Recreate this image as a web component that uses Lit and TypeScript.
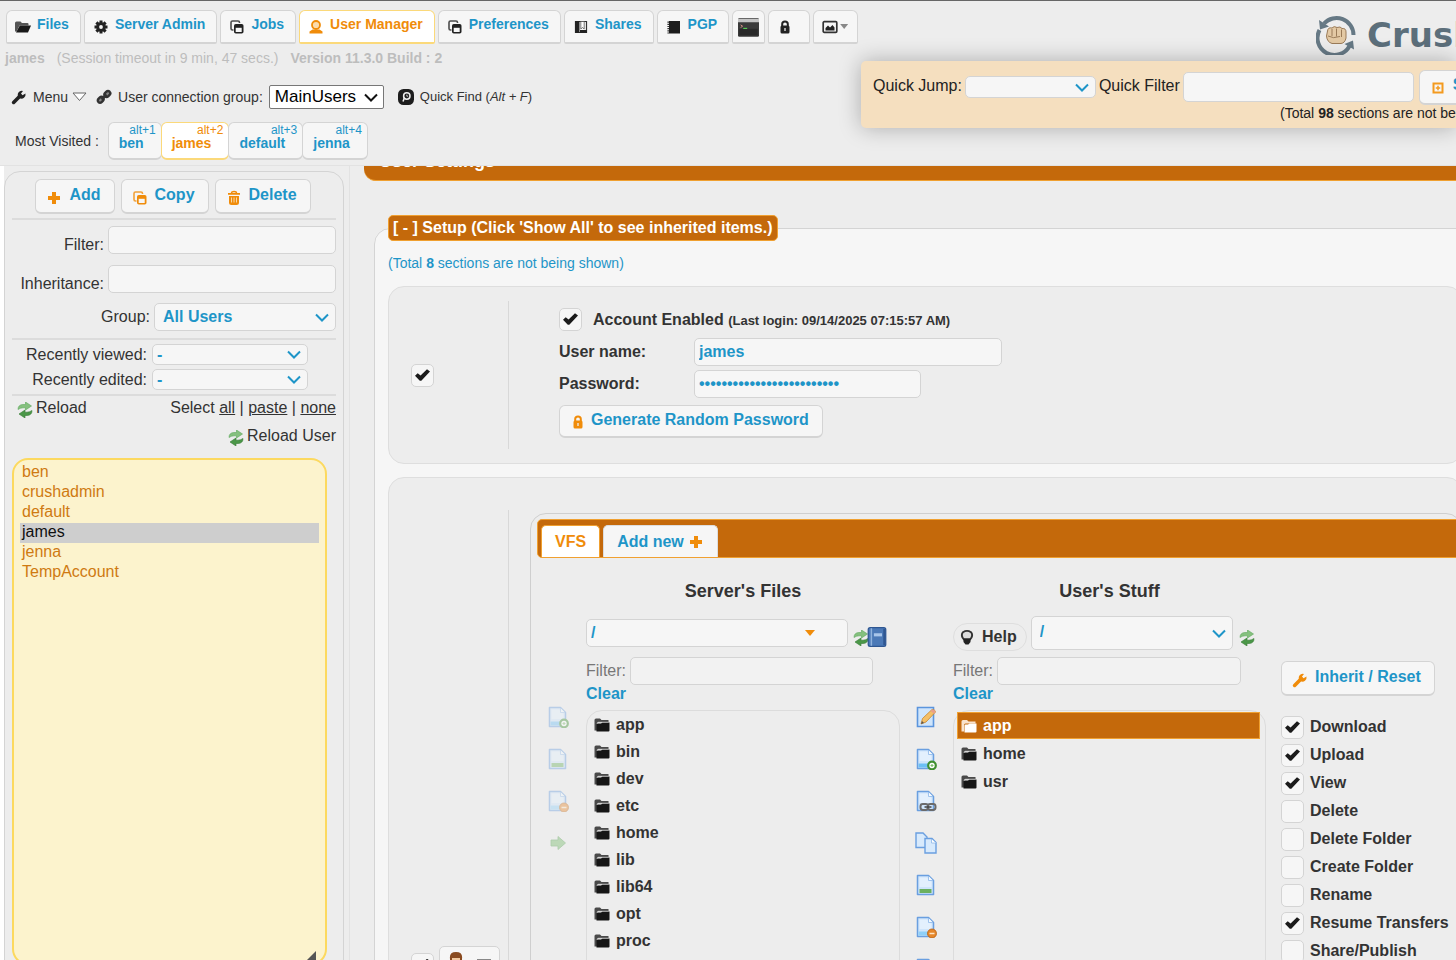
import { LitElement, html, css, svg, TemplateResult } from "lit";
import { customElement, property } from "lit/decorators.js";
import { classMap } from "lit/directives/class-map.js";

const glyphs: Record<string, TemplateResult> = {
  folderOpen: svg`<path d="M0 12.500V4Q0 2.500 1.500 2.500H5.500L7 4H12.500Q13.500 4 13.500 5V6.500H4.500L1.500 12.500Z" fill="#555"/><path d="M4.800 6.500H16L13 13.500H1Z" fill="#1a1a1a"/>`,
  folder: svg`<path d="M.5 13.500V3Q.5 1.500 2 1.500H6L7.500 3H14.500V5H4.500Q3 5 3 6.500V13.500Z" fill="#4a4a4a"/><path d="M2.500 14.500V7.500Q2.500 6.500 3.500 6.500H7L8.500 5.500H15.500V13.500Q15.500 14.500 14.500 14.500Z" fill="#161616"/><path d="M3 7Q3 5.200 4.500 5.200H14.500" fill="none" stroke="#bbb" stroke-width=".7"/>`,
  folderLight: svg`<path d="M.5 13.500V3.500Q.5 2 2 2H6L7.500 3.500H14.500V5.500H4.500Q3 5.500 3 7V13.500Z" fill="#f9e3cd"/><path d="M3.500 14.500V7.500Q3.500 6.500 4.500 6.500H7L8.500 5.500H15.500V13.500Q15.500 14.500 14.500 14.500Z" fill="#fff"/>`,
  gear: svg`<g fill="#222"><path d="M6.500 1.500h3v13h-3zM1.500 6.500h13v3h-13z"/><path d="M6.500 1.500h3v13h-3zM1.500 6.500h13v3h-13z" transform="rotate(45 8 8)"/><circle cx="8" cy="8" r="4.800"/></g><circle cx="8" cy="8" r="1.900" fill="#f6f6f6"/>`,
  copy: svg`<path d="M4.500 11H3.500Q2 11 2 9.500V3.500Q2 2 3.500 2H9Q10.500 2 10.500 3.500V4" fill="none" stroke="currentColor" stroke-width="1.600" opacity=".8"/><rect x="5" y="5" width="9.500" height="9.500" rx="1.800" fill="currentColor"/><rect x="6.700" y="8.800" width="6" height="4.200" fill="#f6f6f6"/>`,
  person: svg`<circle cx="8" cy="6" r="4" fill="#fbdcae" stroke="currentColor" stroke-width="1.800"/><path d="M4.500 10.500H11.500L14.500 12.500V14.500H1.500V12.500Z" fill="currentColor"/>`,
  bookmark: svg`<path d="M2.500 2.500H13.500V13.500H2.500Z" fill="#f6f6f6" stroke="#333" stroke-width="1.200"/><path d="M2 2h4.500v12H2z" fill="#222"/><path d="M7.800 2.500V10L9.500 8.500 11.200 10V2.500Z" fill="#fff" stroke="#555" stroke-width=".8"/><path d="M7 11h7v3H7z" fill="#222"/>`,
  book: svg`<path d="M3 2h11v12.500H3z" fill="#1d1d1d"/><path d="M2.200 2.500v12" stroke="#333" stroke-width="1.600" stroke-dasharray="1.200 1"/>`,
  lock: svg`<path d="M5.200 8V5Q5.200 2.500 8 2.500T10.800 5V8" fill="none" stroke="currentColor" stroke-width="2"/><rect x="3.500" y="6.500" width="9" height="8" rx="1.500" fill="currentColor"/><path d="M8 9v3" stroke="#eee" stroke-width="1.300"/>`,
  terminal: svg`<rect x="0" y="1" width="16" height="14" rx="1" fill="#3a3a3a"/><path d="M0 1.500H16V4H0Z" fill="#c4c4c4"/><path d="M1 9H15V14H1Z" fill="#2a2a2a"/><path d="M2 6l1.500 1L2 8" fill="none" stroke="#d98" stroke-width=".7"/><path d="M4 8.700h3" stroke="#5c5" stroke-width=".9"/>`,
  image: svg`<rect x="1.200" y="2.700" width="13.600" height="10.600" rx="1" fill="none" stroke="#333" stroke-width="1.700"/><path d="M3.500 11.500V9L6 6.500 8 8.500 10.500 6 12.500 8.500V11.500Z" fill="#222"/>`,
  wrench: svg`<path d="M2.600 13.400L9 7" stroke="currentColor" stroke-width="3.600" stroke-linecap="round"/><path d="M7 7.500Q6 4.500 8.500 2.500 10.300 1.300 12 2L10 4.500 11.500 6.200 14.500 4.500Q15 7 13 8.800 11 10.300 8.500 9.200Z" fill="currentColor"/>`,
  link: svg`<g fill="#888" stroke="#333" stroke-width="2.400"><rect x="1.500" y="8.500" width="6.500" height="4.500" rx="2.200" transform="rotate(-45 4.700 10.700)"/><rect x="8" y="2.800" width="6.500" height="4.500" rx="2.200" transform="rotate(-45 11.200 5)"/></g><path d="M5.500 10.500L10.500 5.500" stroke="#333" stroke-width="2.400"/>`,
  find: svg`<rect x="0" y="0" width="16" height="16" rx="5.500" fill="#1d1d1d"/><circle cx="8.800" cy="7" r="3.200" fill="none" stroke="#eee" stroke-width="1.500"/><path d="M6.500 8.500L5 12.500" stroke="#eee" stroke-width="1.600"/><path d="M8.800 5.600v1.600h1.300" stroke="#eee" fill="none" stroke-width=".8"/>`,
  plus: svg`<path d="M6 2h4v4h4v4h-4v4H6v-4H2V6h4z" fill="currentColor"/>`,
  trash: svg`<path d="M5.500 3Q5.500 1.500 8 1.500T10.500 3" fill="none" stroke="currentColor" stroke-width="1.400"/><path d="M2 3h12v1.800H2zM3 6h10v6.500Q13 15 10.500 15h-5Q3 15 3 12.500z" fill="currentColor"/><path d="M5.500 7.500v5M8 7.500v5M10.500 7.500v5" stroke="#fbe0b8" stroke-width=".9"/>`,
  showAll: svg`<rect x="3.500" y="3.500" width="9" height="9" fill="none" stroke="#f39a1f" stroke-width="2"/><path d="M8 5.800v4.400M5.800 8h4.400" stroke="#f39a1f" stroke-width="1.500"/>`,
  reload: svg`<path d="M1 7.500Q1 3 5.500 2.500H8.500V0L14.500 4 8.500 8V5.800H6Q3 6 1 7.500Z" fill="#85c07e" stroke="#5da85a" stroke-width=".6"/><path d="M15 8.500Q15 13 10.500 13.500H8V16L2 12 8 8V10.200H10Q13 10 15 8.500Z" fill="#4b9748" stroke="#357a34" stroke-width=".6"/>`,
  bluebook: svg`<rect x="1" y=".5" width="14" height="15" rx="1.500" fill="#4b79b7" stroke="#2f5792"/><path d="M3.500 1v14" stroke="#8fb2dd" stroke-width="1.200"/><path d="M13.800 1.500v13" stroke="#2f5792" stroke-width="1.600"/><path d="M5.500 5h6.500v2.500H5.500z" fill="#a9c6ea"/>`,
  bulb: svg`<path d="M4 3.200Q8 .6 12 3.200 14 5.500 12.500 8.500L11 10.500H5L3.500 8.500Q2 5.500 4 3.200Z" fill="#ddd" stroke="#333" stroke-width="1.900"/><path d="M4.500 9.500h7V13L9.500 15.500h-3L4.500 13Z" fill="#222"/>`,
};

const pageBase = svg`<path d="M2.500 1.500H13.500L18.500 6.500V20.500H2.500Z" fill="#cfe5fb" stroke="#6a9fe0" stroke-width="1.500" stroke-linejoin="round"/><path d="M4.500 3.500H12L16.500 8V13H4.500Z" fill="#e3f0fd"/><path d="M13.500 2V6.500H18" fill="#f4faff" stroke="#8db8ea" stroke-width=".8"/>`;
const pages: Record<string, TemplateResult> = {
  edit: svg`<path d="M2.500 1.500H18.500V20.500H2.500Z" fill="#cfe5fb" stroke="#5b95dd" stroke-width="1.600"/><path d="M6 18L7.500 12.500 17 3.500Q20 3 20.500 6L11 16Z" fill="#f4c067" stroke="#c8842a" stroke-width=".8"/><path d="M15.500 5L17 3.500Q20 3 20.500 6L19 7.800Z" fill="#e9a08a"/><path d="M6 18l1-3 2 2z" fill="#555"/>`,
  add: svg`${pageBase}<path d="M3.500 15.500H17.500V19.500H3.500Z" fill="#6cc0f5"/><circle cx="17" cy="17.500" r="3.800" fill="#fff" stroke="#3f8f2f" stroke-width="2.200"/><path d="M17 16v3M15.500 17.500h3" stroke="#7dbb6c" stroke-width="1.200"/>`,
  chain: svg`${pageBase}<g fill="none" stroke="#6a6a6a" stroke-width="2"><rect x="5.500" y="14" width="7.500" height="6" rx="2.400"/><rect x="13" y="14" width="7.500" height="6" rx="2.400"/></g><path d="M9.500 17h7" stroke="#444" stroke-width="1.500"/>`,
  two: svg`<path d="M1 1H8L12 5V15.500H1Z" fill="#d8eafc" stroke="#6a9fe0" stroke-width="1.400"/><path d="M10 6.500H17L21 10.500V21H10Z" fill="#d8eafc" stroke="#6a9fe0" stroke-width="1.400"/><path d="M16.500 7v4H21" fill="#fff" stroke="#8db8ea" stroke-width=".8"/>`,
  rename: svg`${pageBase}<path d="M4.500 15H16.500V19H4.500Z" fill="#6bb05f"/>`,
  remove: svg`${pageBase}<path d="M3.500 15.500H17.500V19.500H3.500Z" fill="#8fd0f8"/><circle cx="17" cy="17.500" r="4.500" fill="#e6872a" stroke="#b8600f" stroke-width=".8"/><path d="M14.500 17.500h5" stroke="#fde4c5" stroke-width="1.500"/>`,
  arrow: svg`<path d="M4 8H11V4.500L18.500 11 11 17.500V14H4Z" fill="#74bb69" stroke="#4f9a48" stroke-width=".8"/>`,
};

@customElement("ui-icon")
class UiIcon extends LitElement {
  @property() name = "";
  @property({ type: Number }) size = 16;
  static styles = css`
    :host { display: inline-flex; flex: none; }
    svg { display: block; }
  `;
  render() {
    const page = pages[this.name];
    return html`<svg width=${this.size} height=${this.size} viewBox=${page ? "0 0 22 22" : "0 0 16 16"} aria-hidden="true">${page ?? glyphs[this.name]}</svg>`;
  }
}

const NAV = [
  { icon: "folderOpen", label: "Files" },
  { icon: "gear", label: "Server Admin" },
  { icon: "copy", label: "Jobs" },
  { icon: "person", label: "User Manager", active: true },
  { icon: "copy", label: "Preferences" },
  { icon: "bookmark", label: "Shares" },
  { icon: "book", label: "PGP" },
];
const VISITED = ["ben", "james", "default", "jenna"];
const USERS = ["ben", "crushadmin", "default", "james", "jenna", "TempAccount"];
const SERVER_DIRS = ["app", "bin", "dev", "etc", "home", "lib", "lib64", "opt", "proc"];
const USER_DIRS = ["app", "home", "usr"];
const PERMISSIONS: [string, boolean][] = [
  ["Download", true], ["Upload", true], ["View", true], ["Delete", false], ["Delete Folder", false],
  ["Create Folder", false], ["Rename", false], ["Resume Transfers", true], ["Share/Publish", false],
];

@customElement("app-root")
class AppRoot extends LitElement {
  static styles = css`
    :host {
      display: flex; flex-direction: column; height: 100vh; overflow: hidden; position: relative;
      font-family: "Liberation Sans", Arial, sans-serif; font-size: 16px; line-height: 18px; color: #333; background: #ededed;
      --blue: #1e95c8; --orange: #f08c0a; --bar: #c4690b; --line: #d4d4d4; --field: #f6f6f6;
    }
    *, *::before { box-sizing: border-box; }
    button, input, select { font: inherit; color: inherit; margin: 0; }
    a { color: inherit; }
    .btn {
      display: inline-flex; align-items: center; gap: 7px; height: 35px; padding: 0 13px 0 10px; white-space: nowrap;
      font-weight: bold; color: var(--blue); background: var(--field); border: 1px solid var(--line); border-radius: 6px;
      border-bottom-width: 2px;
    }
    .btn span { padding-bottom: 3px; }
    .btn ui-icon { color: var(--orange); padding-top: 3px; }
    .field { height: 28px; background: var(--field); border: 1px solid var(--line); border-radius: 5px; padding: 0 4px; font-weight: bold; color: var(--blue); min-width: 0; outline: none; }
    select.field {
      appearance: none; padding-right: 26px;
      background: var(--field) url("data:image/svg+xml,%3Csvg xmlns='http://www.w3.org/2000/svg' width='14' height='9'%3E%3Cpath d='M1 1.500L7 7.500L13 1.500' fill='none' stroke='%231e95c8' stroke-width='2'/%3E%3C/svg%3E") no-repeat right 6px center;
    }

    header { flex: none; display: flex; justify-content: space-between; border-top: 1px solid #666; border-bottom: 1px solid #e2e2e2; padding: 9px 0 5px; }
    .left { flex: none; }
    nav { display: flex; gap: 3px; padding-left: 6px; }
    .nav { display: flex; align-items: center; gap: 6px; height: 34px; padding: 0 11px 0 8px; font-size: 14px; font-weight: bold; color: var(--blue); background: var(--field); border: 1px solid var(--line); border-bottom-width: 2px; border-radius: 6px 6px 2px 2px; white-space: nowrap; }
    .nav span { padding-bottom: 5px; }
    .nav ui-icon { color: #222; padding-top: 1px; }
    .nav.active { background: #fff; color: var(--orange); border-color: #fbd97a; }
    .nav.active ui-icon { color: var(--orange); }
    .nav.glyph { padding: 0 5px; }
    .nav.pad { padding: 0 16px 0 8px; }
    .nav.menu { gap: 2px; padding: 0 9px 0 8px; }
    .drop { width: 8px; height: 5px; background: #888; clip-path: polygon(0 0, 100% 0, 50% 100%); }
    .status { display: flex; gap: 12px; margin-top: 6px; padding-left: 5px; font-size: 14px; line-height: 16px; color: #bdbdbd; }
    .tools { display: flex; align-items: center; margin-top: 19px; padding-left: 11px; height: 24px; font-size: 14px; }
    .menubtn { display: flex; align-items: center; gap: 6px; padding: 0; border: 0; background: none; }
    .menubtn ui-icon { color: #222; }
    .tri { display: block; margin-left: -2px; }
    .tools label { display: flex; align-items: center; gap: 6px; margin-left: 9px; }
    .group { font-size: 17px; color: #000; border: 1px solid #777; border-radius: 2px; height: 24px; width: 115px; padding: 0 0 0 5px; appearance: none;
      background: #fff url("data:image/svg+xml,%3Csvg xmlns='http://www.w3.org/2000/svg' width='14' height='9'%3E%3Cpath d='M1 1.500L7 7.500L13 1.500' fill='none' stroke='%23111' stroke-width='2'/%3E%3C/svg%3E") no-repeat right 5px center; }
    .quickfind { display: flex; align-items: center; gap: 6px; margin-left: 14px; font-size: 13px; }
    .visited { display: flex; align-items: center; margin-top: 13px; padding-left: 15px; font-size: 14px; }
    .tabs { display: flex; margin-left: 9px; }
    .tab { display: flex; flex-direction: column; height: 38px; margin-right: -1px; padding: 1px 17px 0 10px; background: var(--field); border: 1px solid var(--line); border-bottom-width: 2px; border-radius: 6px; color: var(--blue); font-weight: bold; text-align: left; line-height: 14px; }
    .tab small { font-size: 12px; line-height: 12px; font-weight: normal; align-self: flex-end; margin-right: -12px; }
    .tab.active { background: #fff; color: var(--orange); border-color: #fbd97a; }
    .brand { display: flex; gap: 10px; width: 140px; overflow: hidden; height: 50px; align-items: center; }
    .brand svg { flex: none; }
    .brand span { font-family: "DejaVu Sans", sans-serif; font-weight: bold; font-size: 34px; line-height: 40px; color: #5c6f7b; }

    .quick { position: absolute; z-index: 2; top: 61px; left: 861px; right: 0; padding: 8px 0 7px 12px; background: #f5dfbf; border-radius: 5px 0 0 5px; box-shadow: 0 0 22px rgba(0,0,0,.28); color: #222; clip-path: inset(-40px 0 -40px -40px); }
    .quickrow { display: flex; align-items: center; gap: 3px; height: 36px; white-space: nowrap; overflow: hidden; }
    .quickrow label { padding-bottom: 3px; }
    .quickrow .jump { width: 131px; height: 22px; flex: none; }
    .quickrow .qf { width: 231px; height: 30px; flex: none; }
    .quickrow .btn { flex: none; margin-left: 2px; }
    .total { padding-left: 407px; font-size: 14px; line-height: 16px; white-space: nowrap; overflow: hidden; }

    .body { flex: 1; display: flex; min-height: 0; }
    aside { flex: none; width: 350px; padding: 5px 5px 0 0; border-left: 4px solid #fff; border-right: 1px solid #e2e2e2; overflow: hidden; }
    .panel { border: 1px solid var(--line); border-radius: 16px; padding: 7px 7px 60px; }
    .row { display: flex; justify-content: flex-end; gap: 4px; align-items: center; }
    .acts { justify-content: center; gap: 6px; padding-right: 2px; }
    .row.in { align-items: flex-end; margin-top: 11px; }
    .row.first { margin-top: 6px; }
    .row.mid { align-items: center; margin-top: 10px; }
    .row .f { width: 228px; }
    .row .g { width: 182px; padding-left: 8px; }
    .rec { margin-top: 4px; padding-right: 28px; gap: 5px; }
    .rec .field { width: 156px; height: 21px; line-height: 16px; }
    hr { border: 0; border-top: 2px solid #dcdcdc; margin: 4px 0 0; }
    .group-end { margin-top: 7px; }
    .links { display: flex; justify-content: space-between; margin-top: 3px; padding-left: 5px; }
    .link { display: flex; gap: 3px; padding: 0; border: 0; background: none; line-height: 18px; }
    .link ui-icon { padding-top: 3px; }
    .links.end { justify-content: flex-end; margin-top: 9px; }
    .listwrap { position: relative; margin-top: 12px; width: 315px; }
    .users { display: block; width: 100%; height: 507px; padding: 3px 6px; background: #fcf3cd; border: 2px solid #fcd95f; border-radius: 16px; color: #cf7a12; overflow: hidden; outline: none; }
    .users option { padding: 0 2px; min-height: 20px; height: 20px; line-height: 20px; }
    .grip { position: absolute; right: 11px; bottom: 4px; width: 10px; height: 10px; background: #555; clip-path: polygon(100% 0, 100% 100%, 0 100%); }

    main { flex: 1; min-width: 0; padding: 0 0 0 14px; overflow: hidden; }
    .title { margin: -18px 0 0; height: 33px; padding: 2px 15px 0; background: var(--bar); border-bottom: 1px solid #f0a030; border-radius: 12px 0 0 12px; font-size: 18px; line-height: 22px; font-weight: bold; color: #fff; }
    fieldset { margin: 34px -20px 0 10px; padding: 12px 12px 0 13px; border: 1px solid var(--line); border-radius: 16px; background: #f6f6f6; min-width: 0; }
    legend { padding: 0 4px; line-height: 24px; background: var(--bar); color: #fff; font-weight: bold; border: 1px solid #f0a030; border-radius: 5px; white-space: nowrap; }
    .note { margin: 0; font-size: 14px; line-height: 20px; color: var(--blue); }
    .card { display: grid; grid-template-columns: 120px 1fr; margin-top: 13px; padding: 14px 0; border: 1px solid #dedede; border-radius: 16px; background: #ededed; }
    .card.two { padding-top: 32px; }
    .pick { display: flex; align-items: center; padding-left: 22px; gap: 5px; border-right: 1px solid #d8d8d8; }
    .two .pick { align-items: flex-start; padding-top: 436px; }
    .two .pick input { margin-top: 7px; }
    .avatar { width: 61px; height: 35px; display: flex; gap: 12px; align-items: flex-start; padding: 5px 7px; background: var(--field); border: 1px solid var(--line); border-radius: 5px; }
    .avatar i { width: 14px; height: 2px; background: #888; margin-top: 7px; }
    input[type="checkbox"] { appearance: none; flex: none; width: 23px; height: 23px; margin: 0; border: 1px solid var(--line); border-radius: 5px; background: var(--field); display: grid; place-items: center; }
    input[type="checkbox"]:checked::before { content: ""; width: 15px; height: 12px; background: #1b1b1b; clip-path: polygon(0 56%, 18% 36%, 37% 55%, 80% 2%, 100% 20%, 42% 98%, 32% 98%); }
    .account { padding: 6px 0 11px 50px; font-weight: bold; display: flex; flex-direction: column; gap: 4px; align-items: flex-start; }
    .enabled { display: flex; align-items: center; gap: 11px; height: 24px; margin-bottom: 3px; }
    .enabled label { padding-top: 3px; }
    .enabled small { font-size: 13px; }
    .pair { display: grid; grid-template-columns: 135px auto; height: 28px; }
    .pair label { padding-top: 5px; }
    .pair .name { width: 308px; }
    .pair .pass { width: 227px; }
    .account .btn { height: 33px; margin-top: 3px; gap: 5px; }
    .account .btn ui-icon { padding-top: 1px; }

    .vfs { margin: 3px 0 0 21px; padding: 5px 0 0 6px; border: 1px solid #cfcfcf; border-radius: 16px; }
    .vtabs { display: flex; gap: 3px; height: 39px; padding: 5px 3px 0; background: var(--bar); border: 1px solid #f0a030; border-radius: 5px; }
    .vtab { display: flex; align-items: center; gap: 4px; height: 32px; padding: 0 13px; border: 1px solid #f0a030; border-bottom: 0; border-radius: 5px 5px 0 0; background: #fff; color: var(--orange); font-weight: bold; }
    .vtab.new { background: var(--field); color: var(--blue); border-color: #ddd; }
    .vtab ui-icon { color: var(--orange); }
    .cols { display: grid; grid-template-columns: 49px 314px 53px 313px 15px auto; justify-content: start; padding-top: 22px; }
    h2 { margin: 0; font-size: 18px; line-height: 22px; text-align: center; font-weight: bold; }
    .icons { display: flex; flex-direction: column; gap: 20px; padding-top: 126px; }
    .icons button { display: block; padding: 0; border: 0; background: none; width: 22px; height: 22px; }
    .icons.a { padding-left: 10px; }
    .icons.a button { opacity: .4; }
    .icons.b { padding-left: 15px; }
    .path { display: flex; align-items: center; height: 34px; margin-top: 14px; }
    .path .p1 { width: 262px; background: var(--field) url("data:image/svg+xml,%3Csvg xmlns='http://www.w3.org/2000/svg' width='10' height='6'%3E%3Cpath d='M0 0H10L5 6Z' fill='%23f08c0a'/%3E%3C/svg%3E") no-repeat right 32px center; margin-right: 5px; }
    .path .p2 { width: 202px; height: 34px; margin: 0 6px 0 4px; padding-left: 8px; padding-bottom: 2px; }
    .path .link { padding-top: 6px; }
    .path .book ui-icon { padding-top: 1px; margin-left: -2px; }
    .help { display: flex; align-items: center; gap: 7px; height: 28px; padding: 0 9px 0 5px; margin-top: 8px; border: 1px solid #dedede; border-radius: 14px; background: none; font-weight: bold; }
    .filter { display: flex; gap: 4px; margin-top: 7px; color: #777; }
    .filter label { padding-top: 5px; }
    .filter .field { background: #f2f2f2; }
    .filter .w1 { width: 243px; }
    .filter .w2 { width: 244px; }
    .clear { display: block; width: max-content; color: var(--blue); font-weight: bold; text-decoration: none; line-height: 18px; }
    .dirs { list-style: none; margin: 7px 0 0; padding: 0 5px 300px 3px; border: 1px solid #dcdcdc; border-radius: 16px; }
    .dirs button { display: flex; align-items: center; gap: 6px; width: 100%; height: 27px; padding: 0 3px; border: 1px solid transparent; background: none; font-weight: bold; text-align: left; }
    .dirs .sel { background: var(--bar); border-color: #f0a030; color: #fff; }
    .dirs.mine { padding-top: 1px; }
    .dirs.mine li + li { margin-top: 1px; }
    .perms { padding-top: 81px; }
    .perms .btn { margin-bottom: 17px; }
    .perm { display: flex; align-items: center; gap: 6px; height: 28px; font-weight: bold; white-space: nowrap; }
  `;

  private files(dirs: string[], selected: string | null, mine: boolean) {
    return html`<ul class=${classMap({ dirs: true, mine })}>
      ${dirs.map((d) => html`<li><button class=${d === selected ? "sel" : ""}><ui-icon name=${d === selected ? "folderLight" : "folder"}></ui-icon>${d}</button></li>`)}
    </ul>`;
  }

  private header() {
    return html`<header>
      <div class="left">
        <nav>
          ${NAV.map((n) => html`<button class=${classMap({ nav: true, active: !!n.active })}><ui-icon name=${n.icon}></ui-icon><span>${n.label}</span></button>`)}
          <button class="nav glyph" aria-label="Terminal"><ui-icon name="terminal" size="21"></ui-icon></button>
          <button class="nav pad" aria-label="Lock"><ui-icon name="lock"></ui-icon></button>
          <button class="nav menu" aria-label="Theme"><ui-icon name="image"></ui-icon><i class="drop"></i></button>
        </nav>
        <div class="status"><b>james</b><span>(Session timeout in 9 min, 47 secs.)</span><b>Version 11.3.0 Build : 2</b></div>
        <div class="tools">
          <button class="menubtn"><ui-icon name="wrench"></ui-icon>Menu<svg class="tri" width="15" height="10"><path d="M1 1H14L7.500 8.500Z" fill="#fff" stroke="#666"/></svg></button>
          <label><ui-icon name="link"></ui-icon>User connection group:
            <select class="group"><option>MainUsers</option></select></label>
          <div class="quickfind"><ui-icon name="find"></ui-icon><span>Quick Find (<em>Alt + F</em>)</span></div>
        </div>
        <div class="visited">Most Visited :
          <div class="tabs">${VISITED.map((v, i) => html`<button class=${classMap({ tab: true, active: v === "james" })}><small>alt+${i + 1}</small>${v}</button>`)}</div>
        </div>
      </div>
      <div class="brand">
        <svg width="41" height="40" viewBox="0 0 41 40">
          <g fill="none" stroke="#667985" stroke-width="4"><path d="M8 8.500A17 17 0 0 1 37.500 20"/><path d="M33.500 31A17 17 0 0 1 3.500 15"/></g>
          <path d="M3 5L4 14.500L13 11.500ZM38 34.500L37 25.500L28.500 29Z" fill="#667985"/>
          <path d="M11.500 16Q12 12 16 13 18 10.500 21 12.500 24.500 11 26 13.500 30 13 30 17V23Q29 28 25 28.500H16Q11 27 10.500 21Z" fill="#e3c9a4" stroke="#9a7b58"/>
          <path d="M16 14V21M20.500 13.500V21.500M25.500 14.500V22M12 21Q17 24 24 21.500" fill="none" stroke="#9a7b58"/>
        </svg>
        <span>CrushFTP</span>
      </div>
    </header>
    <section class="quick">
      <div class="quickrow">
        <label for="jump">Quick Jump:</label><select id="jump" class="field jump"></select>
        <label for="qf">Quick Filter</label><input id="qf" class="field qf" />
        <button class="btn"><ui-icon name="showAll"></ui-icon><span>Show All</span></button>
      </div>
      <div class="total">(Total <b>98</b> sections are not being shown)</div>
    </section>`;
  }

  private sidebar() {
    return html`<aside><div class="panel">
      <div class="row acts">
        <button class="btn"><ui-icon name="plus"></ui-icon><span>Add</span></button>
        <button class="btn"><ui-icon name="copy"></ui-icon><span>Copy</span></button>
        <button class="btn"><ui-icon name="trash"></ui-icon><span>Delete</span></button>
      </div>
      <hr />
      <div class="row in first"><label for="flt">Filter:</label><input id="flt" class="field f" /></div>
      <div class="row in"><label for="inh">Inheritance:</label><input id="inh" class="field f" /></div>
      <div class="row mid"><label for="grp">Group:</label><select id="grp" class="field g"><option>All Users</option></select></div>
      <hr class="group-end" />
      <div class="row rec"><label for="rv">Recently viewed:</label><select id="rv" class="field"><option>-</option></select></div>
      <div class="row rec"><label for="re">Recently edited:</label><select id="re" class="field"><option>-</option></select></div>
      <hr />
      <div class="links"><button class="link"><ui-icon name="reload"></ui-icon>Reload</button>
        <span>Select <a href="#all">all</a> | <a href="#paste">paste</a> | <a href="#none">none</a></span></div>
      <div class="links end"><button class="link"><ui-icon name="reload"></ui-icon>Reload User</button></div>
      <div class="listwrap">
        <select class="users" multiple size="20" aria-label="Users">${USERS.map((u) => html`<option ?selected=${u === "james"}>${u}</option>`)}</select>
        <i class="grip"></i>
      </div>
    </div></aside>`;
  }

  private iconButtons(names: string[], cls: string) {
    return html`<div class="icons ${cls}">${names.map((n) => html`<button aria-label=${n}><ui-icon name=${n} size="22"></ui-icon></button>`)}</div>`;
  }

  private content() {
    return html`<main>
      <h1 class="title">User Settings</h1>
      <fieldset>
        <legend>[ - ] Setup (Click 'Show All' to see inherited items.)</legend>
        <p class="note">(Total <b>8</b> sections are not being shown)</p>
        <section class="card">
          <div class="pick"><input type="checkbox" aria-label="Override account" checked /></div>
          <div class="account">
            <div class="enabled"><input id="en" type="checkbox" checked /><label for="en">Account Enabled <small>(Last login: 09/14/2025 07:15:57 AM)</small></label></div>
            <div class="pair"><label for="un">User name:</label><input id="un" class="field name" value="james" /></div>
            <div class="pair"><label for="pw">Password:</label><input id="pw" type="password" class="field pass" value="aaaaaaaaaaaaaaaaaaaaaaaaa" /></div>
            <button class="btn"><ui-icon name="lock"></ui-icon><span>Generate Random Password</span></button>
          </div>
        </section>
        <section class="card two">
          <div class="pick"><input type="checkbox" aria-label="Override VFS" checked />
            <button class="avatar" aria-label="Inheritance"><svg width="18" height="22" viewBox="0 0 18 22"><path d="M3 7Q2 0 9 0T15 7V10H3Z" fill="#8a4b20"/><path d="M5 6H13V11Q9 15 5 11Z" fill="#f2c9a0"/><path d="M1 22Q2 14 9 14T17 22Z" fill="#5b86c0"/></svg><i></i></button>
          </div>
          <div class="vfs">
            <div class="vtabs"><button class="vtab">VFS</button><button class="vtab new">Add new<ui-icon name="plus"></ui-icon></button></div>
            <div class="cols">
              ${this.iconButtons(["add", "rename", "remove", "arrow"], "a")}
              <div>
                <h2>Server's Files</h2>
                <div class="path"><input class="field p1" aria-label="Server path" value="/" /><button class="link" aria-label="Reload"><ui-icon name="reload"></ui-icon></button><button class="link book" aria-label="Bookmarks"><ui-icon name="bluebook" size="20"></ui-icon></button></div>
                <div class="filter"><label for="f1">Filter:</label><input id="f1" class="field w1" /></div>
                <a class="clear" href="#clear">Clear</a>
                ${this.files(SERVER_DIRS, null, false)}
              </div>
              ${this.iconButtons(["edit", "add", "chain", "two", "rename", "remove", "add"], "b")}
              <div>
                <h2>User's Stuff</h2>
                <div class="path"><button class="help"><ui-icon name="bulb"></ui-icon>Help</button><select class="field p2" aria-label="User path"><option>/</option></select><button class="link" aria-label="Reload"><ui-icon name="reload"></ui-icon></button></div>
                <div class="filter"><label for="f2">Filter:</label><input id="f2" class="field w2" /></div>
                <a class="clear" href="#clear">Clear</a>
                ${this.files(USER_DIRS, "app", true)}
              </div>
              <div></div>
              <div class="perms">
                <button class="btn"><ui-icon name="wrench"></ui-icon><span>Inherit / Reset</span></button>
                ${PERMISSIONS.map(([label, on]) => html`<label class="perm"><input type="checkbox" ?checked=${on} />${label}</label>`)}
              </div>
            </div>
          </div>
        </section>
      </fieldset>
    </main>`;
  }

  render() {
    return html`${this.header()}<div class="body">${this.sidebar()}${this.content()}</div>`;
  }
}
